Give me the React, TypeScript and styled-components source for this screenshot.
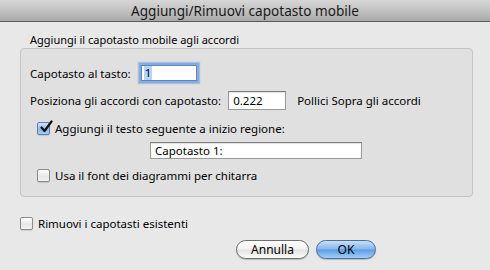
import styled, { createGlobalStyle } from "styled-components";

const GlobalStyle = createGlobalStyle`
    html, body {
        margin: 0;
        padding: 0;
        background: #e8e8e8;
    }
    body {
        font-family: "Lucida Grande", "Noto Sans", sans-serif;
        font-size: 11.5px;
        color: #000;
    }
`;

const CheckMark = () => (
    <svg width="14" height="14" viewBox="0 0 14 14" style={{ position: "absolute", left: 1, top: -3 }}>
        <path d="M2.5 7.5 L5.5 11 L12.5 1.5" fill="none" stroke="#111" strokeWidth="2.2" strokeLinecap="round" strokeLinejoin="round" />
    </svg>
);

interface CheckProps {
    checked?: boolean;
    label: string;
}

const Check = ({ checked, label }: CheckProps) => (
    <CheckLabel>
        <Box $checked={checked}>{checked && <CheckMark />}</Box>
        <span>{label}</span>
    </CheckLabel>
);

const App = () => {
    return (
        <Window>
            <GlobalStyle />
            <TitleBar>Aggiungi/Rimuovi capotasto mobile</TitleBar>
            <Body>
                <GroupTitle>Aggiungi il capotasto mobile agli accordi</GroupTitle>
                <Group>
                    <Row $h={22}>
                        <span>Capotasto al tasto:</span>
                        <FocusField $w={56}>
                            <Selected>1</Selected>
                        </FocusField>
                    </Row>
                    <Row $h={21} $top={6}>
                        <span>Posiziona gli accordi con capotasto:</span>
                        <Field $w={58} $h={19}>0.222</Field>
                        <Unit>Pollici Sopra gli accordi</Unit>
                    </Row>
                    <Row $h={18} $top={8} $indent={7}>
                        <Check checked label="Aggiungi il testo seguente a inizio regione:" />
                    </Row>
                    <Row $h={18} $top={4} $indent={118}>
                        <Field $w={212} $h={17}>Capotasto 1:</Field>
                    </Row>
                    <Row $h={18} $top={7} $indent={7}>
                        <Check label="Usa il font dei diagrammi per chitarra" />
                    </Row>
                </Group>
                <Row $h={18} $top={17}>
                    <Check label="Rimuovi i capotasti esistenti" />
                </Row>
                <Buttons>
                    <Button>Annulla</Button>
                    <Button $primary>OK</Button>
                </Buttons>
            </Body>
        </Window>
    );
};

export default App;

const Window = styled.div`
    width: 490px;
    height: 270px;
    background: #e8e8e8;
    overflow: hidden;
`;

const TitleBar = styled.div`
    height: 21px;
    line-height: 21px;
    text-align: center;
    font-size: 13.6px;
    color: #1a1a1a;
    background: linear-gradient(to bottom, #d6d6d6 0%, #c2c2c2 50%, #a9a9a9 100%);
    border-bottom: 1px solid #5a5a5a;
`;

const Body = styled.div`
    padding: 0 17px 0 20px;
`;

const GroupTitle = styled.div`
    height: 26px;
    line-height: 14px;
    font-size: 11px;
    padding: 11px 0 0 10px;
    box-sizing: border-box;
`;

const Group = styled.div`
    height: 149px;
    box-sizing: border-box;
    border: 1px solid #c4c4c4;
    border-radius: 4px;
    background: #e0e0e0;
    padding: 13px 0 0 9px;
`;

const Row = styled.div<{ $h: number; $top?: number; $indent?: number }>`
    display: flex;
    align-items: center;
    height: ${({ $h }) => $h}px;
    margin-top: ${({ $top }) => $top ?? 0}px;
    padding-left: ${({ $indent }) => $indent ?? 0}px;
    gap: 5px;
    white-space: nowrap;
`;

const Field = styled.div<{ $w: number; $h: number }>`
    width: ${({ $w }) => $w}px;
    height: ${({ $h }) => $h}px;
    box-sizing: border-box;
    background: #fff;
    border: 1px solid #9a9a9a;
    border-top-color: #7c7c7c;
    box-shadow: inset 0 1px 1px rgba(0, 0, 0, 0.12);
    padding: 0 4px;
    display: flex;
    align-items: center;
    margin-left: 2px;
`;

const FocusField = styled.div<{ $w: number }>`
    width: ${({ $w }) => $w}px;
    height: 16px;
    margin-left: 5px;
    box-sizing: border-box;
    background: #fff;
    border: 1px solid #5b86c2;
    box-shadow: 0 0 0 2px #84ace0, 0 0 1px 3px rgba(120, 160, 215, 0.5);
    display: flex;
    align-items: center;
    padding-left: 2px;
`;

const Selected = styled.span`
    background: #b5d5ff;
    padding: 0 1px;
    line-height: 14px;
`;

const Unit = styled.span`
    margin-left: 6px;
`;

const CheckLabel = styled.label`
    display: flex;
    align-items: center;
    gap: 5px;
`;

const Box = styled.span<{ $checked?: boolean }>`
    position: relative;
    width: 13px;
    height: 13px;
    box-sizing: border-box;
    border-radius: 2px;
    border: 1px solid ${({ $checked }) => ($checked ? "#5b7fb0" : "#8a8a8a")};
    background: ${({ $checked }) =>
        $checked
            ? "linear-gradient(to bottom, #cfe3fa, #8fb8ea 60%, #a9cbf3)"
            : "linear-gradient(to bottom, #ffffff, #e6e6e6 60%, #f4f4f4)"};
    box-shadow: 0 1px 1px rgba(0, 0, 0, 0.12);
`;

const Buttons = styled.div`
    display: flex;
    gap: 7px;
    margin: 8px 0 0 216px;
`;

const Button = styled.button<{ $primary?: boolean }>`
    height: 19px;
    width: ${({ $primary }) => ($primary ? 60 : 73)}px;
    border-radius: 10px;
    font-family: "Lucida Grande", "Noto Sans", sans-serif;
    font-size: 12px;
    color: #000;
    padding: 0;
    border: 1px solid ${({ $primary }) => ($primary ? "#4a6fa0" : "#6e6e6e")};
    background: ${({ $primary }) =>
        $primary
            ? "linear-gradient(to bottom, #c8e0fb 0%, #86b6ec 48%, #5f9be3 52%, #9cd0fb 100%)"
            : "linear-gradient(to bottom, #ffffff 0%, #f2f2f2 48%, #e2e2e2 52%, #fbfbfb 100%)"};
    box-shadow: 0 1px 1px rgba(0, 0, 0, 0.2);
`;
